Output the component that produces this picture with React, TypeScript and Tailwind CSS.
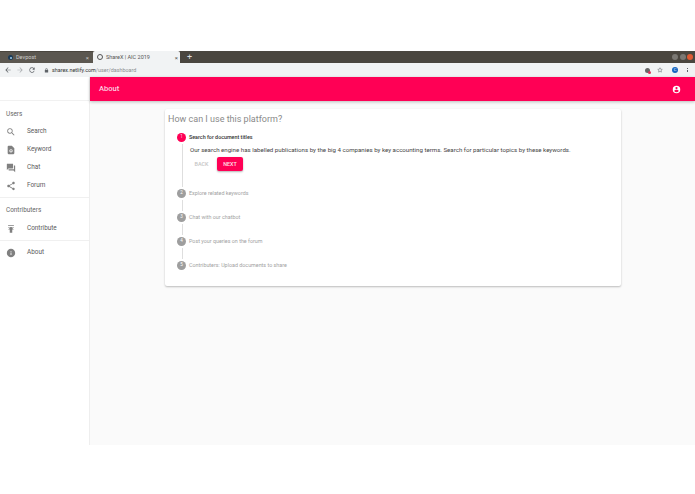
import React from "react";

const navIcons: Record<string, React.ReactNode> = {
  search: <path d="M15.5 14h-.79l-.28-.27A6.47 6.47 0 0 0 16 9.5 6.5 6.5 0 1 0 9.5 16c1.61 0 3.09-.59 4.23-1.57l.27.28v.79l5 4.99L20.49 19l-4.99-5zm-6 0C7.01 14 5 11.99 5 9.5S7.01 5 9.5 5 14 7.01 14 9.5 11.99 14 9.5 14z" />,
  keyword: <path fillRule="evenodd" d="M14 2H6c-1.1 0-2 .9-2 2v16c0 1.100.9 2 2 2h12c1.100 0 2-.9 2-2V8l-6-6zm-2 16a4 4 0 1 1 0-8 4 4 0 0 1 0 8zm0-2a2 2 0 1 0 0-4 2 2 0 0 0 0 4z" />,
  chat: <path d="M21 6h-2v9H6v2c0 .55.45 1 1 1h11l4 4V7c0-.55-.45-1-1-1zm-4 6V3c0-.55-.45-1-1-1H3c-.55 0-1 .45-1 1v14l4-4h10c.55 0 1-.45 1-1z" />,
  forum: <path d="M18 16.080c-.76 0-1.440.3-1.960.77L8.910 12.700c.05-.23.090-.46.090-.7s-.04-.47-.09-.7l7.050-4.110c.54.5 1.250.81 2.040.81 1.660 0 3-1.340 3-3s-1.340-3-3-3-3 1.340-3 3c0 .24.040.47.090.7L8.040 9.810C7.500 9.310 6.790 9 6 9c-1.660 0-3 1.340-3 3s1.340 3 3 3c.79 0 1.500-.31 2.040-.81l7.120 4.160c-.05.21-.08.43-.08.65 0 1.610 1.310 2.920 2.920 2.920 1.610 0 2.920-1.310 2.920-2.920s-1.310-2.920-2.920-2.920z" />,
  contribute: <path d="M5 3v2h14V3H5zm0 4v1.500h14V7H5zm0 6h4v8h6v-8h4l-7-6-7 6z" />,
  about: <path d="M12 2C6.480 2 2 6.480 2 12s4.480 10 10 10 10-4.480 10-10S17.520 2 12 2zm1 15h-2v-6h2v6zm0-8h-2V7h2v2z" />,
};

function NavItem({ icon, label }: { icon: string; label: string }) {
  return (
    <div className="flex h-[18px] items-center pl-[6px]">
      <svg viewBox="0 0 24 24" className="h-[10px] w-[10px] fill-[#808080]">
        {navIcons[icon]}
      </svg>
      <span className="ml-[11px] text-[6.4px] text-[#5c5c5c]">{label}</span>
    </div>
  );
}

function Step({ n, label, last }: { n: number; label: string; last?: boolean }) {
  return (
    <div className="flex flex-col">
      <div className="flex h-[9px] items-center gap-[3px]">
        <span className="flex h-[9px] w-[9px] shrink-0 items-center justify-center rounded-full bg-[#9e9e9e] text-[4.5px] text-white">{n}</span>
        <span className="text-[5.37px] text-[#a2a2a2]">{label}</span>
      </div>
      {!last && <div className="my-[2px] ml-[5px] h-[11px] w-px bg-[#dedede]" />}
    </div>
  );
}

export default function App() {
  return (
    <div className="flex h-[494px] w-[695px] flex-col overflow-hidden bg-white font-['Roboto','Liberation_Sans',sans-serif]">
      <div className="h-[51px] shrink-0 bg-white" />

      <div className="flex h-[12px] shrink-0 items-end bg-[#4a463f] pl-0">
        <div className="flex h-[11px] w-[93px] items-center bg-[#5b5750] pl-[8px] pr-[2px]">
          <span className="flex h-[5px] w-[5px] items-center justify-center rounded-full bg-[#1b3a57]">
            <span className="h-[2px] w-[2px] rounded-full bg-[#9fd0ef]" />
          </span>
          <span className="ml-[3px] text-[5.5px] text-[#cfcdca]">Devpost</span>
          <span className="ml-auto mr-[2px] text-[6px] text-[#c6c4c0]">×</span>
        </div>
        <div className="flex h-[12px] w-[87px] items-center rounded-t-[2px] bg-[#f1f3f4] pl-[4px] pr-[2px]">
          <span className="h-[6px] w-[6px] rounded-full border-[1.5px] border-[#555]" />
          <span className="ml-[3px] text-[5.5px] text-[#555]">ShareX | AIC 2019</span>
          <span className="ml-auto text-[6px] text-[#555]">×</span>
        </div>
        <span className="ml-[7px] self-center text-[9px] leading-none text-[#ddd]">+</span>
        <div className="ml-auto flex gap-[1.5px] self-center pr-[2px]">
          <span className="h-[6px] w-[6px] rounded-full bg-[#7b7873]" />
          <span className="h-[6px] w-[6px] rounded-full bg-[#7b7873]" />
          <span className="h-[6px] w-[6px] rounded-full bg-[#df5a33]" />
        </div>
      </div>

      <div className="flex h-[14px] shrink-0 items-center bg-[#f1f3f4] pl-[4px] pr-[7px]">
        <svg viewBox="0 0 24 24" className="h-[8px] w-[8px] fill-[#5f6368]"><path d="M20 11H7.830l5.590-5.590L12 4l-8 8 8 8 1.410-1.410L7.830 13H20v-2z" /></svg>
        <svg viewBox="0 0 24 24" className="ml-[4px] h-[8px] w-[8px] fill-[#a9acaf]"><path d="M12 4l-1.410 1.410L16.170 11H4v2h12.170l-5.580 5.590L12 20l8-8z" /></svg>
        <svg viewBox="0 0 24 24" className="ml-[4px] h-[8px] w-[8px] fill-[#5f6368]"><path d="M17.650 6.350A7.960 7.960 0 0 0 12 4a8 8 0 1 0 7.730 10h-2.080A6 6 0 1 1 12 6c1.660 0 3.140.69 4.220 1.780L13 11h7V4l-2.350 2.350z" /></svg>
        <svg viewBox="0 0 24 24" className="ml-[8px] h-[5px] w-[5px] fill-[#5f6368]"><path d="M18 8h-1V6A5 5 0 0 0 7 6v2H6a2 2 0 0 0-2 2v10c0 1.100.9 2 2 2h12a2 2 0 0 0 2-2V10a2 2 0 0 0-2-2zM9 6a3 3 0 0 1 6 0v2H9V6z" /></svg>
        <span className="ml-[3px] text-[5.4px] text-[#333]">sharex.netlify.com<span className="text-[#8a8d90]">/user/dashboard</span></span>
        <div className="ml-auto flex items-center">
          <span className="relative h-[5px] w-[5px] rounded-full bg-[#666]">
            <span className="absolute -bottom-[1px] -right-[1px] h-[3px] w-[3px] rounded-full bg-[#d8325a]" />
          </span>
          <svg viewBox="0 0 24 24" className="ml-[7px] h-[6px] w-[6px] fill-none stroke-[#5f6368] stroke-2"><path d="M12 3l2.800 5.800 6.200.9-4.500 4.400 1.100 6.300L12 17.400l-5.600 3 1.100-6.300L3 9.700l6.200-.9z" /></svg>
          <span className="ml-[9px] flex h-[6px] w-[6px] items-center justify-center rounded-full bg-[#1565c0] text-[4px] text-white">C</span>
          <span className="ml-[9px] flex flex-col gap-[0.6px]">
            <span className="h-[1px] w-[1px] bg-[#5f6368]" />
            <span className="h-[1px] w-[1px] bg-[#5f6368]" />
            <span className="h-[1px] w-[1px] bg-[#5f6368]" />
          </span>
        </div>
      </div>

      <div className="flex min-h-0 flex-1">
        <aside className="flex w-[90px] shrink-0 flex-col border-r border-[#eeeeee] bg-white">
          <div className="h-[24px] border-b border-[#f1f1f1]" />
          <div className="flex h-[22px] items-center pl-[6px] pt-[6px] text-[6.4px] text-[#666]">Users</div>
          <div className="flex flex-col">
            <NavItem icon="search" label="Search" />
            <NavItem icon="keyword" label="Keyword" />
            <NavItem icon="chat" label="Chat" />
            <NavItem icon="forum" label="Forum" />
          </div>
          <div className="mt-[2px] border-t border-[#f0f0f0]" />
          <div className="flex h-[22px] items-center pl-[6px] pt-[4px] text-[6.4px] text-[#666]">Contributers</div>
          <NavItem icon="contribute" label="Contribute" />
          <div className="mt-[2px] border-t border-[#f0f0f0]" />
          <div className="mt-[3px]">
            <NavItem icon="about" label="About" />
          </div>
        </aside>

        <div className="flex h-[368px] min-w-0 flex-1 flex-col bg-[#fafafa]">
          <header className="flex h-[24px] shrink-0 items-center justify-between bg-[#ff0055] pl-[9px] pr-[14px] shadow-[0_1px_3px_rgba(0,0,0,0.25)]">
            <span className="text-[7.6px] font-medium text-[#fbd5e1]">About</span>
            <svg viewBox="0 0 24 24" className="h-[9px] w-[9px] fill-white"><path d="M12 2a10 10 0 1 0 0 20 10 10 0 0 0 0-20zm0 3a3 3 0 1 1 0 6 3 3 0 0 1 0-6zm0 14.200a7.200 7.200 0 0 1-6-3.220c.03-1.990 4-3.080 6-3.080s5.970 1.090 6 3.080a7.200 7.200 0 0 1-6 3.220z" /></svg>
          </header>
          <main className="flex-1 pl-[75px] pt-[8px]">
            <div className="h-[177px] w-[456px] rounded-[2px] bg-white pl-[3px] pt-[3px] shadow-[0_1px_2px_rgba(0,0,0,0.25)]">
              <h1 className="text-[9px] leading-[14px] text-[#8a8a8a]">How can I use this platform?</h1>
              <div className="ml-[9px] mt-[7px] flex flex-col">
                <div className="flex h-[9px] items-center gap-[3px]">
                  <span className="flex h-[9px] w-[9px] shrink-0 items-center justify-center rounded-full bg-[#ff0055] text-[4.5px] text-[#fbd5e1]">1</span>
                  <span className="text-[5.37px] font-medium text-[#333]">Search for document titles</span>
                </div>
                <div className="mb-[2px] ml-[5px] mt-[2px] flex h-[43px] flex-col border-l border-[#dedede] pl-[7px]">
                  <p className="whitespace-nowrap text-[6.13px] leading-[11px] text-[#444]">Our search engine has labelled publications by the big 4 companies by key accounting terms. Search for particular topics by these keywords.</p>
                  <div className="mt-[2px] flex items-center">
                    <span className="w-[23px] text-center text-[5.4px] font-medium text-[#c4c4c4]">BACK</span>
                    <span className="ml-[4px] flex h-[14px] w-[26px] items-center justify-center rounded-[2px] bg-[#ff0055] text-[5.4px] font-medium text-[#fde3eb] shadow-[0_1px_2px_rgba(0,0,0,0.3)]">NEXT</span>
                  </div>
                </div>
                <Step n={2} label="Explore related keywords" />
                <Step n={3} label="Chat with our chatbot" />
                <Step n={4} label="Post your queries on the forum" />
                <Step n={5} label="Contributers: Upload documents to share" last />
              </div>
            </div>
          </main>
        </div>
      </div>
      <div className="h-[49px] shrink-0 bg-white" />
    </div>
  );
}
